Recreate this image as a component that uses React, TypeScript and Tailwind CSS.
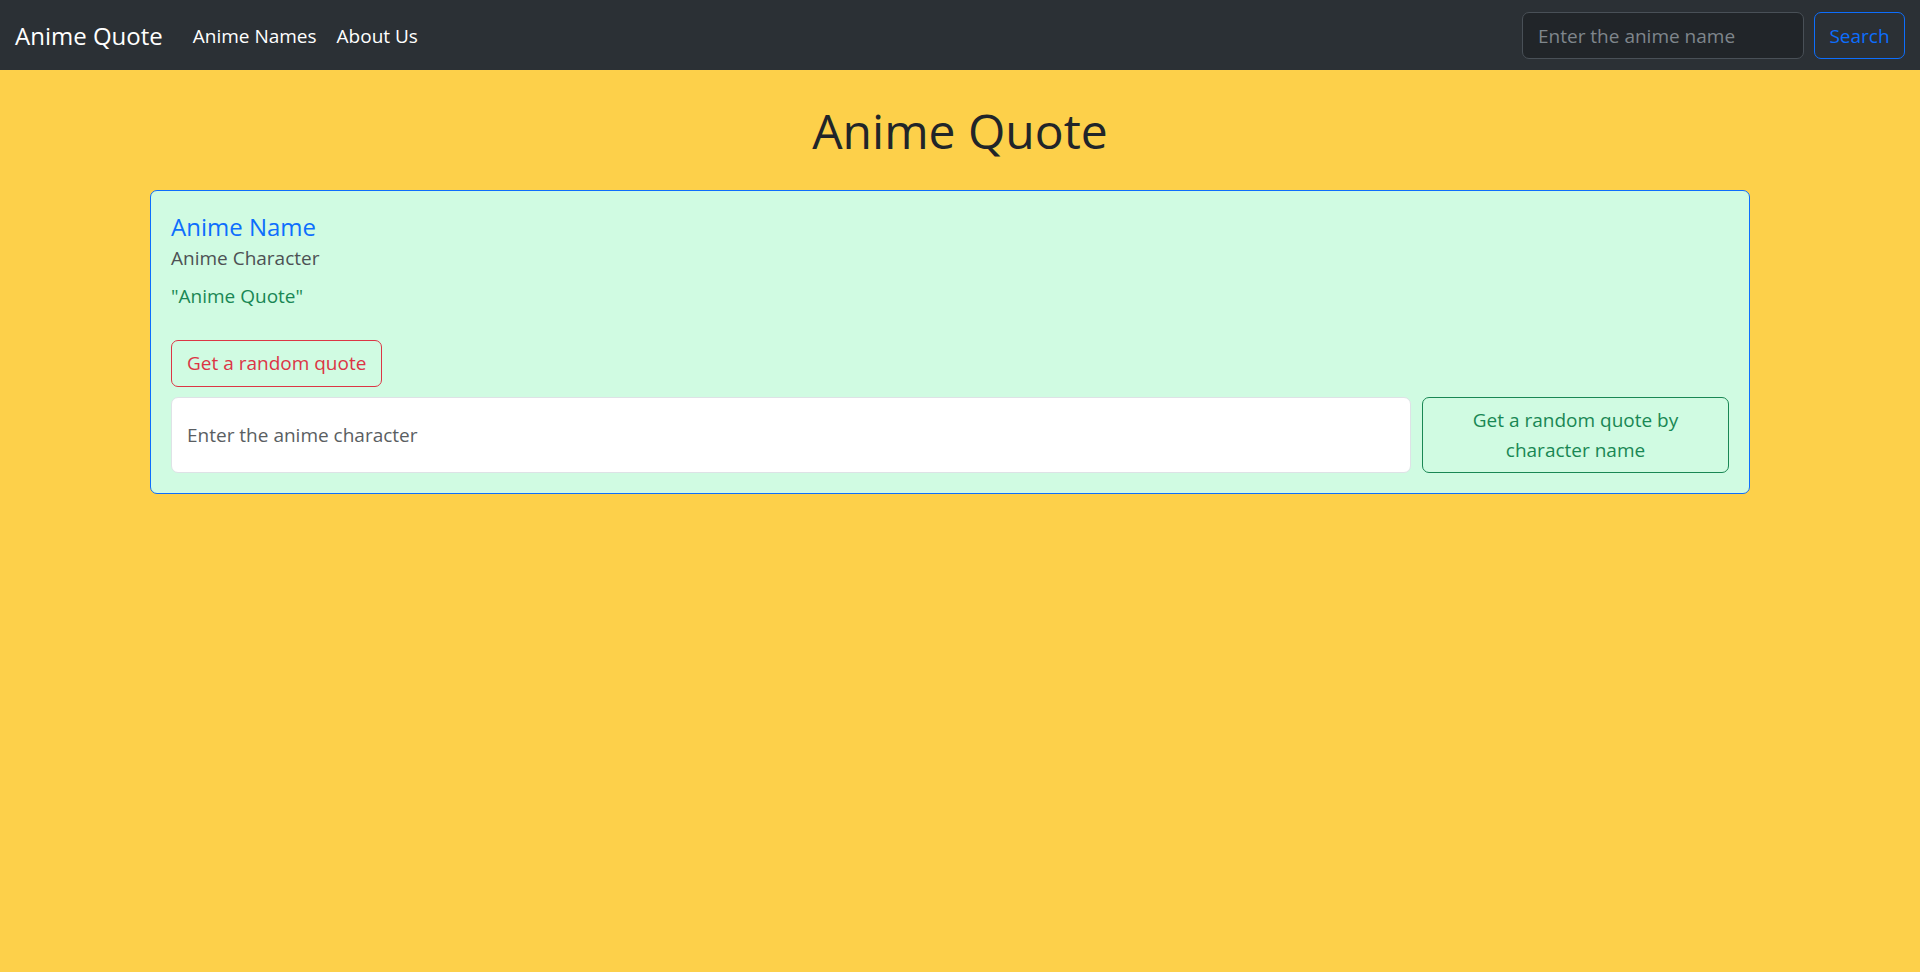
import React, { useState } from 'react';

const font = { fontFamily: '"Open Sans", "Noto Sans", sans-serif' };

export default function App() {
  const [animeName, setAnimeName] = useState('');
  const [character, setCharacter] = useState('');

  return (
    <div className="min-h-[972px] bg-[#fdd04a] text-[#212529]" style={font}>
      {/* Navbar */}
      <nav className="flex h-[70px] items-center justify-between bg-[#2b3035] px-[15px]">
        <div className="flex items-center pt-[2px]">
          <a href="#" className="mr-[20px] text-[24px] leading-[30px] text-white">
            Anime Quote
          </a>
          <a href="#" className="px-[10px] text-[19px] leading-[30px] text-white">
            Anime Names
          </a>
          <a href="#" className="px-[10px] text-[19px] leading-[30px] text-white">
            About Us
          </a>
        </div>
        <form className="flex items-center gap-[10px]" onSubmit={(e) => e.preventDefault()}>
          <input
            value={animeName}
            onChange={(e) => setAnimeName(e.target.value)}
            placeholder="Enter the anime name"
            className="h-[47px] w-[282px] rounded-[7px] border border-[#495057] bg-[#212529] px-[15px] pt-[2px] text-[19px] text-white outline-none placeholder:text-[#7f868c]"
          />
          <button className="h-[47px] w-[91px] rounded-[7px] border border-[#0d6efd] pt-[2px] text-[19px] text-[#0d6efd]">
            Search
          </button>
        </form>
      </nav>

      {/* Heading */}
      <h1 className="mt-[31px] text-center text-[48px] font-normal leading-[60px]">Anime Quote</h1>

      {/* Quote card */}
      <div className="ml-[150px] mt-[29px] w-[1600px] rounded-[7px] border border-[#0d6efd] bg-[#d0fbe2] p-[20px]">
        <h5 className="text-[24px] leading-[31px] text-[#0d6efd]">Anime Name</h5>
        <h6 className="mt-[4px] text-[19px] leading-[24px] text-[#4d5154]">Anime Character</h6>
        <p className="mt-[11px] text-[19px] leading-[30px] text-[#198754]">"Anime Quote"</p>
        <button className="mt-[29px] h-[47px] rounded-[7px] border border-[#dc3545] px-[15px] text-[19px] text-[#dc3545]">
          Get a random quote
        </button>
        <div className="mt-[10px] flex gap-[11px]">
          <input
            value={character}
            onChange={(e) => setCharacter(e.target.value)}
            placeholder="Enter the anime character"
            className="h-[76px] flex-1 rounded-[7px] border border-[#dee2e6] bg-white px-[15px] text-[19px] outline-none placeholder:text-[#5a5e62]"
          />
          <button className="h-[76px] w-[307px] rounded-[7px] border border-[#198754] px-[15px] text-center text-[19px] leading-[30px] text-[#198754]">
            Get a random quote by character name
          </button>
        </div>
      </div>
    </div>
  );
}
